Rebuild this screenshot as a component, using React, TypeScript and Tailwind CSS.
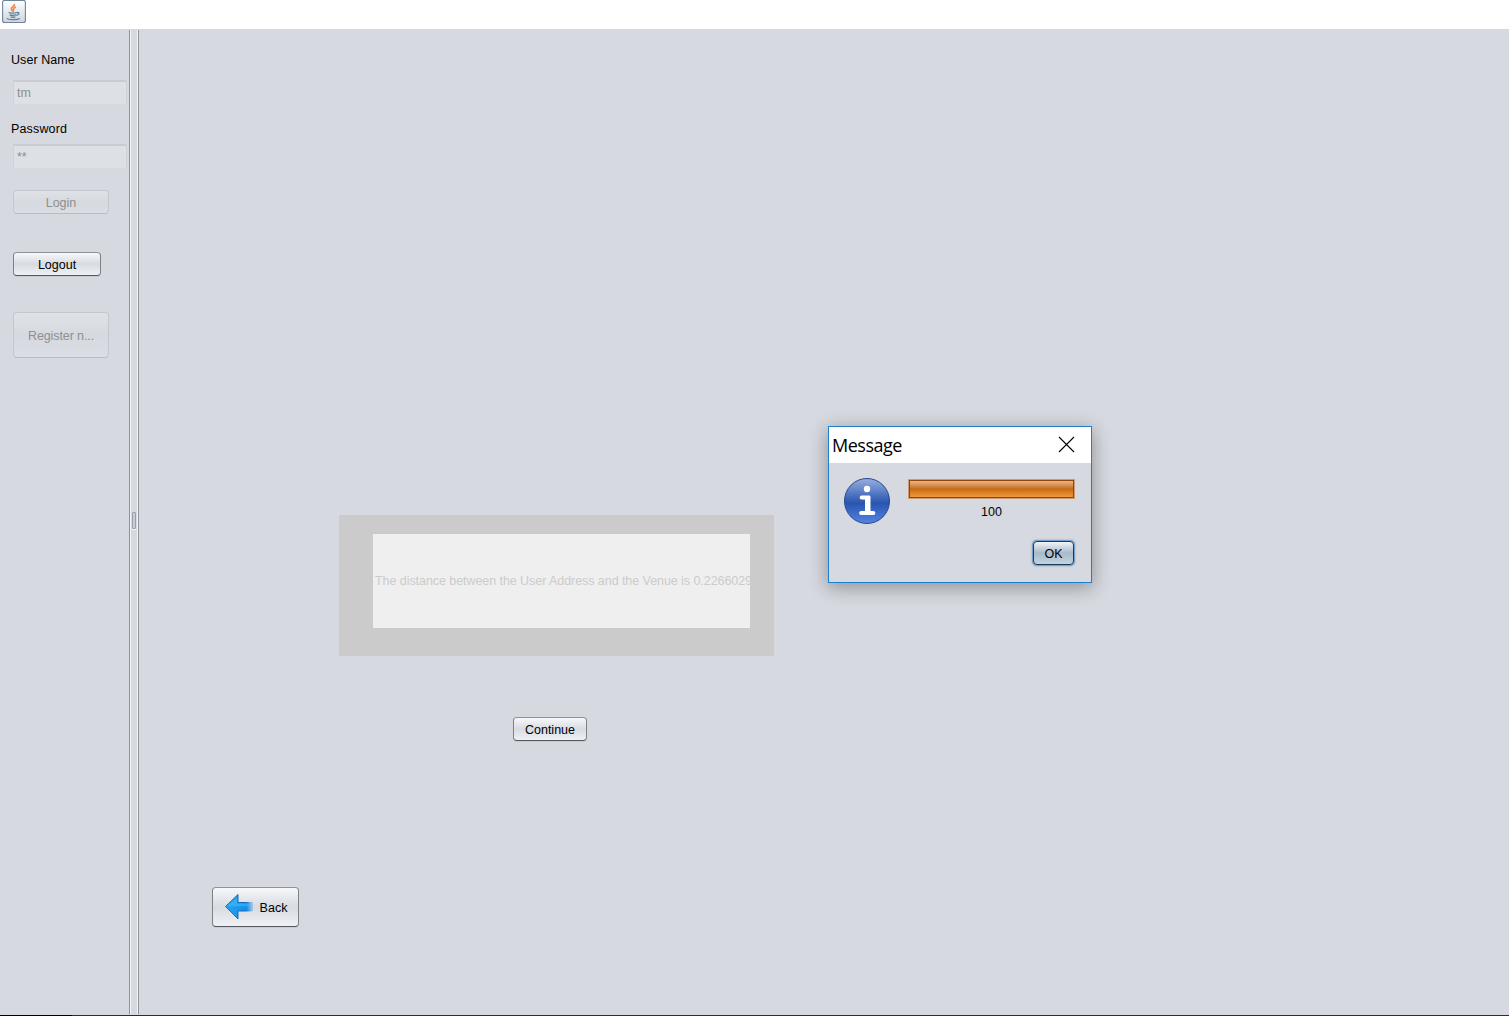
import type { ReactNode } from 'react';

function Btn({ className, disabled, children }: { className: string; disabled?: boolean; children: ReactNode }) {
  const look = disabled
    ? 'border-[#c4c7ce] border-b-[#b9bcc3] bg-linear-to-b from-[#dfe2e6] via-[#d6d9df] to-[#dadde4] text-[#8e8f91]'
    : 'border-[#8f9299] border-b-[#55585e] border-x-[#7d8087] bg-linear-to-b from-[#f7f8fa] via-[#d8dbe2] to-[#eff1f6] text-black shadow-[0_1px_0_#c9ccd2]';
  return (
    <button className={`flex shrink-0 items-center justify-center rounded-[4px] border pt-[2px] whitespace-nowrap ${look} ${className}`}>
      {children}
    </button>
  );
}

function Field({ className, children }: { className: string; children: ReactNode }) {
  return (
    <div className={`ml-[13px] flex h-[24px] w-[114px] items-center border border-t-2 border-[#cfd2d6] border-t-[#c9ccd0] border-b-[#dde0e5] bg-[#dde0e4] pl-[3px] text-[#8e8f91] ${className}`}>
      {children}
    </div>
  );
}

function JavaIcon() {
  return (
    <svg width="24" height="24" viewBox="0 0 24 24" fill="none">
      <defs>
        <linearGradient id="jbg" x1="0" y1="0" x2="0" y2="1">
          <stop offset="0" stopColor="#fff" />
          <stop offset="1" stopColor="#ccd5de" />
        </linearGradient>
      </defs>
      <rect x=".6" y=".4" width="22.8" height="22.1" rx="2" fill="url(#jbg)" stroke="#70859a" strokeWidth="1.1" />
      <path d="M11.900 4c1.800 2.100-3.200 3-2.600 5.100.2.900 1.400 1.600 1.700 2.400M13.900 7.100c-2 .9-3.200 1.800-2.600 2.800.6 1 .2 1.400-.2 1.800" stroke="#ed8a45" strokeWidth="1.600" />
      <path d="M6.600 12.500c1 .8 6.200.8 8.400 0M7.600 14.900c1.800.6 4.600.5 6.600 0M8.600 16.900c1.400.4 3.400.4 4.800-.1M15 12.600c2.800-.6 2.400 2-.6 2.900M4.800 18.400c1.500 1.600 10.600 1.700 13 .1" stroke="#5f809c" strokeWidth="1.300" />
    </svg>
  );
}

function InfoIcon() {
  return (
    <svg width="48" height="48" viewBox="0 0 48 48">
      <defs>
        <linearGradient id="info" x1="0" y1="0" x2="0" y2="1">
          <stop offset="0" stopColor="#98afe0" />
          <stop offset=".45" stopColor="#3b65b9" />
          <stop offset=".55" stopColor="#2856b0" />
          <stop offset="1" stopColor="#5583e3" />
        </linearGradient>
      </defs>
      <circle cx="24" cy="24" r="22.5" fill="url(#info)" stroke="#26488f" />
      <circle cx="24" cy="12" r="3.2" fill="#fff" />
      <path d="M18.500 18.500h7.500c.9 0 1.500.6 1.500 1.500v14h3c2.400 0 2.400 4 0 4H18c-2.400 0-2.400-4 0-4h4V22.500h-3.500c-2.300 0-2.300-4 0-4Z" fill="#fff" />
    </svg>
  );
}

function BackArrow() {
  return (
    <svg width="32" height="28" viewBox="0 0 32 28">
      <defs>
        <linearGradient id="shaft" x1="0" x2="1">
          <stop offset="0" stopColor="#22a5ef" />
          <stop offset=".78" stopColor="#168ee9" />
          <stop offset="1" stopColor="#3da0ec" stopOpacity=".3" />
        </linearGradient>
        <linearGradient id="edge" x1="0" x2="1">
          <stop offset="0" stopColor="#1678c8" />
          <stop offset=".7" stopColor="#1268bb" />
          <stop offset="1" stopColor="#1268bb" stopOpacity="0" />
        </linearGradient>
      </defs>
      <path d="M1.500 13.500 14 1.500v8h15v8.500H14v8Z" fill="url(#shaft)" stroke="url(#edge)" />
      <path d="M3.500 13.200 13 4.400v6h12v2.800Z" fill="#58cafa" opacity=".4" />
    </svg>
  );
}

function MessageDialog() {
  return (
    <section className="absolute top-[426px] left-[828px] flex h-[157px] w-[264px] flex-col border border-[#1d7fd0] bg-[#d6d9df] shadow-[0_4px_17px_1px_rgba(0,0,0,0.32)]">
      <header className="flex h-[36px] shrink-0 items-center justify-between bg-white pr-[16px] pl-[3px]">
        <h1 className="font-['Open_Sans'] text-[18px] leading-6 tracking-[-0.48px]">Message</h1>
        <svg className="-mt-[2px]" width="17" height="17" viewBox="0 0 17 17" stroke="#000" strokeWidth="1.1">
          <path d="m1 1 15 15M16 1 1 16" />
        </svg>
      </header>
      <div className="flex pt-[14px] pl-[14px]">
        <InfoIcon />
        <div className="ml-[18px] flex flex-col items-center pt-[3px]">
          <div className="h-[18px] w-[165px] border border-[#984206] bg-linear-to-b from-[#e6b889] via-[#c86b0c] to-[#f0993a] shadow-[0_0_0_1px_#c79c7c]" />
          <span className="mt-[7px] leading-[14px]">100</span>
        </div>
      </div>
      <button className="mt-[16px] mr-[17px] flex h-[24px] w-[41px] items-center justify-center self-end rounded-[4px] border border-[#1f3953] bg-linear-to-b from-[#f2f5f8] via-[#a9bac9] to-[#c2d4e3] pt-[2px] shadow-[0_0_0_1px_#75a1cb,0_0_2px_1px_#75a1cb]">OK</button>
    </section>
  );
}

export default function App() {
  return (
    <div className="relative flex h-[1016px] w-[1509px] flex-col overflow-hidden bg-[#d6d9df] font-['Liberation_Sans',sans-serif] text-[12.5px] leading-[14px] text-black">
      <header className="h-[29px] shrink-0 bg-white pl-[2px]">
        <JavaIcon />
      </header>
      <div className="flex min-h-0 flex-1">
        <aside className="flex w-[129px] shrink-0 flex-col">
          <label className="mt-[24px] ml-[11px] tracking-[0.07px]">User Name</label>
          <Field className="mt-[13px]">tm</Field>
          <label className="mt-[18px] ml-[11px] tracking-[0.15px]">Password</label>
          <Field className="mt-[8px]">**</Field>
          <Btn disabled className="mt-[22px] ml-[13px] h-[24px] w-[96px]">Login</Btn>
          <Btn className="mt-[38px] ml-[13px] h-[24px] w-[88px]">Logout</Btn>
          <Btn disabled className="mt-[36px] ml-[13px] h-[46px] w-[96px] tracking-[-0.1px]">Register n...</Btn>
        </aside>
        <div className="mt-px mb-px flex w-[10px] shrink-0 items-center justify-center border-x border-[#8f9299]">
          <div className="flex h-full w-full items-center justify-center border-x border-[#f3f4f7] pb-[3px]">
            <div className="h-[17px] w-[4px] rounded-[1px] border border-[#9a9fac] bg-[#c8ccd6] shadow-[0_1px_0_#f3f4f7]" />
          </div>
        </div>
        <main className="flex flex-1 flex-col">
          <div className="mt-[486px] ml-[200px] h-[141px] w-[435px] shrink-0 bg-[#cbcbcb] pt-[19px] pl-[34px]">
            <div className="flex h-[94px] w-[377px] items-center overflow-hidden bg-[#efefef] pl-[2px] tracking-[-0.06px] whitespace-nowrap text-[#cbcbcb]">
              The distance between the User Address and the Venue is 0.2266029
            </div>
          </div>
          <Btn className="mt-[61px] ml-[374px] h-[24px] w-[74px]">Continue</Btn>
          <Btn className="mt-[146px] ml-[73px] h-[40px] w-[87px] gap-[4px]"><span className="-mt-[2px]"><BackArrow /></span><span>Back</span></Btn>
        </main>
      </div>
      <footer className="h-px shrink-0 bg-[#2b2c2e]">
        <div className="h-px w-[72px] bg-black" />
      </footer>
      <MessageDialog />
    </div>
  );
}
